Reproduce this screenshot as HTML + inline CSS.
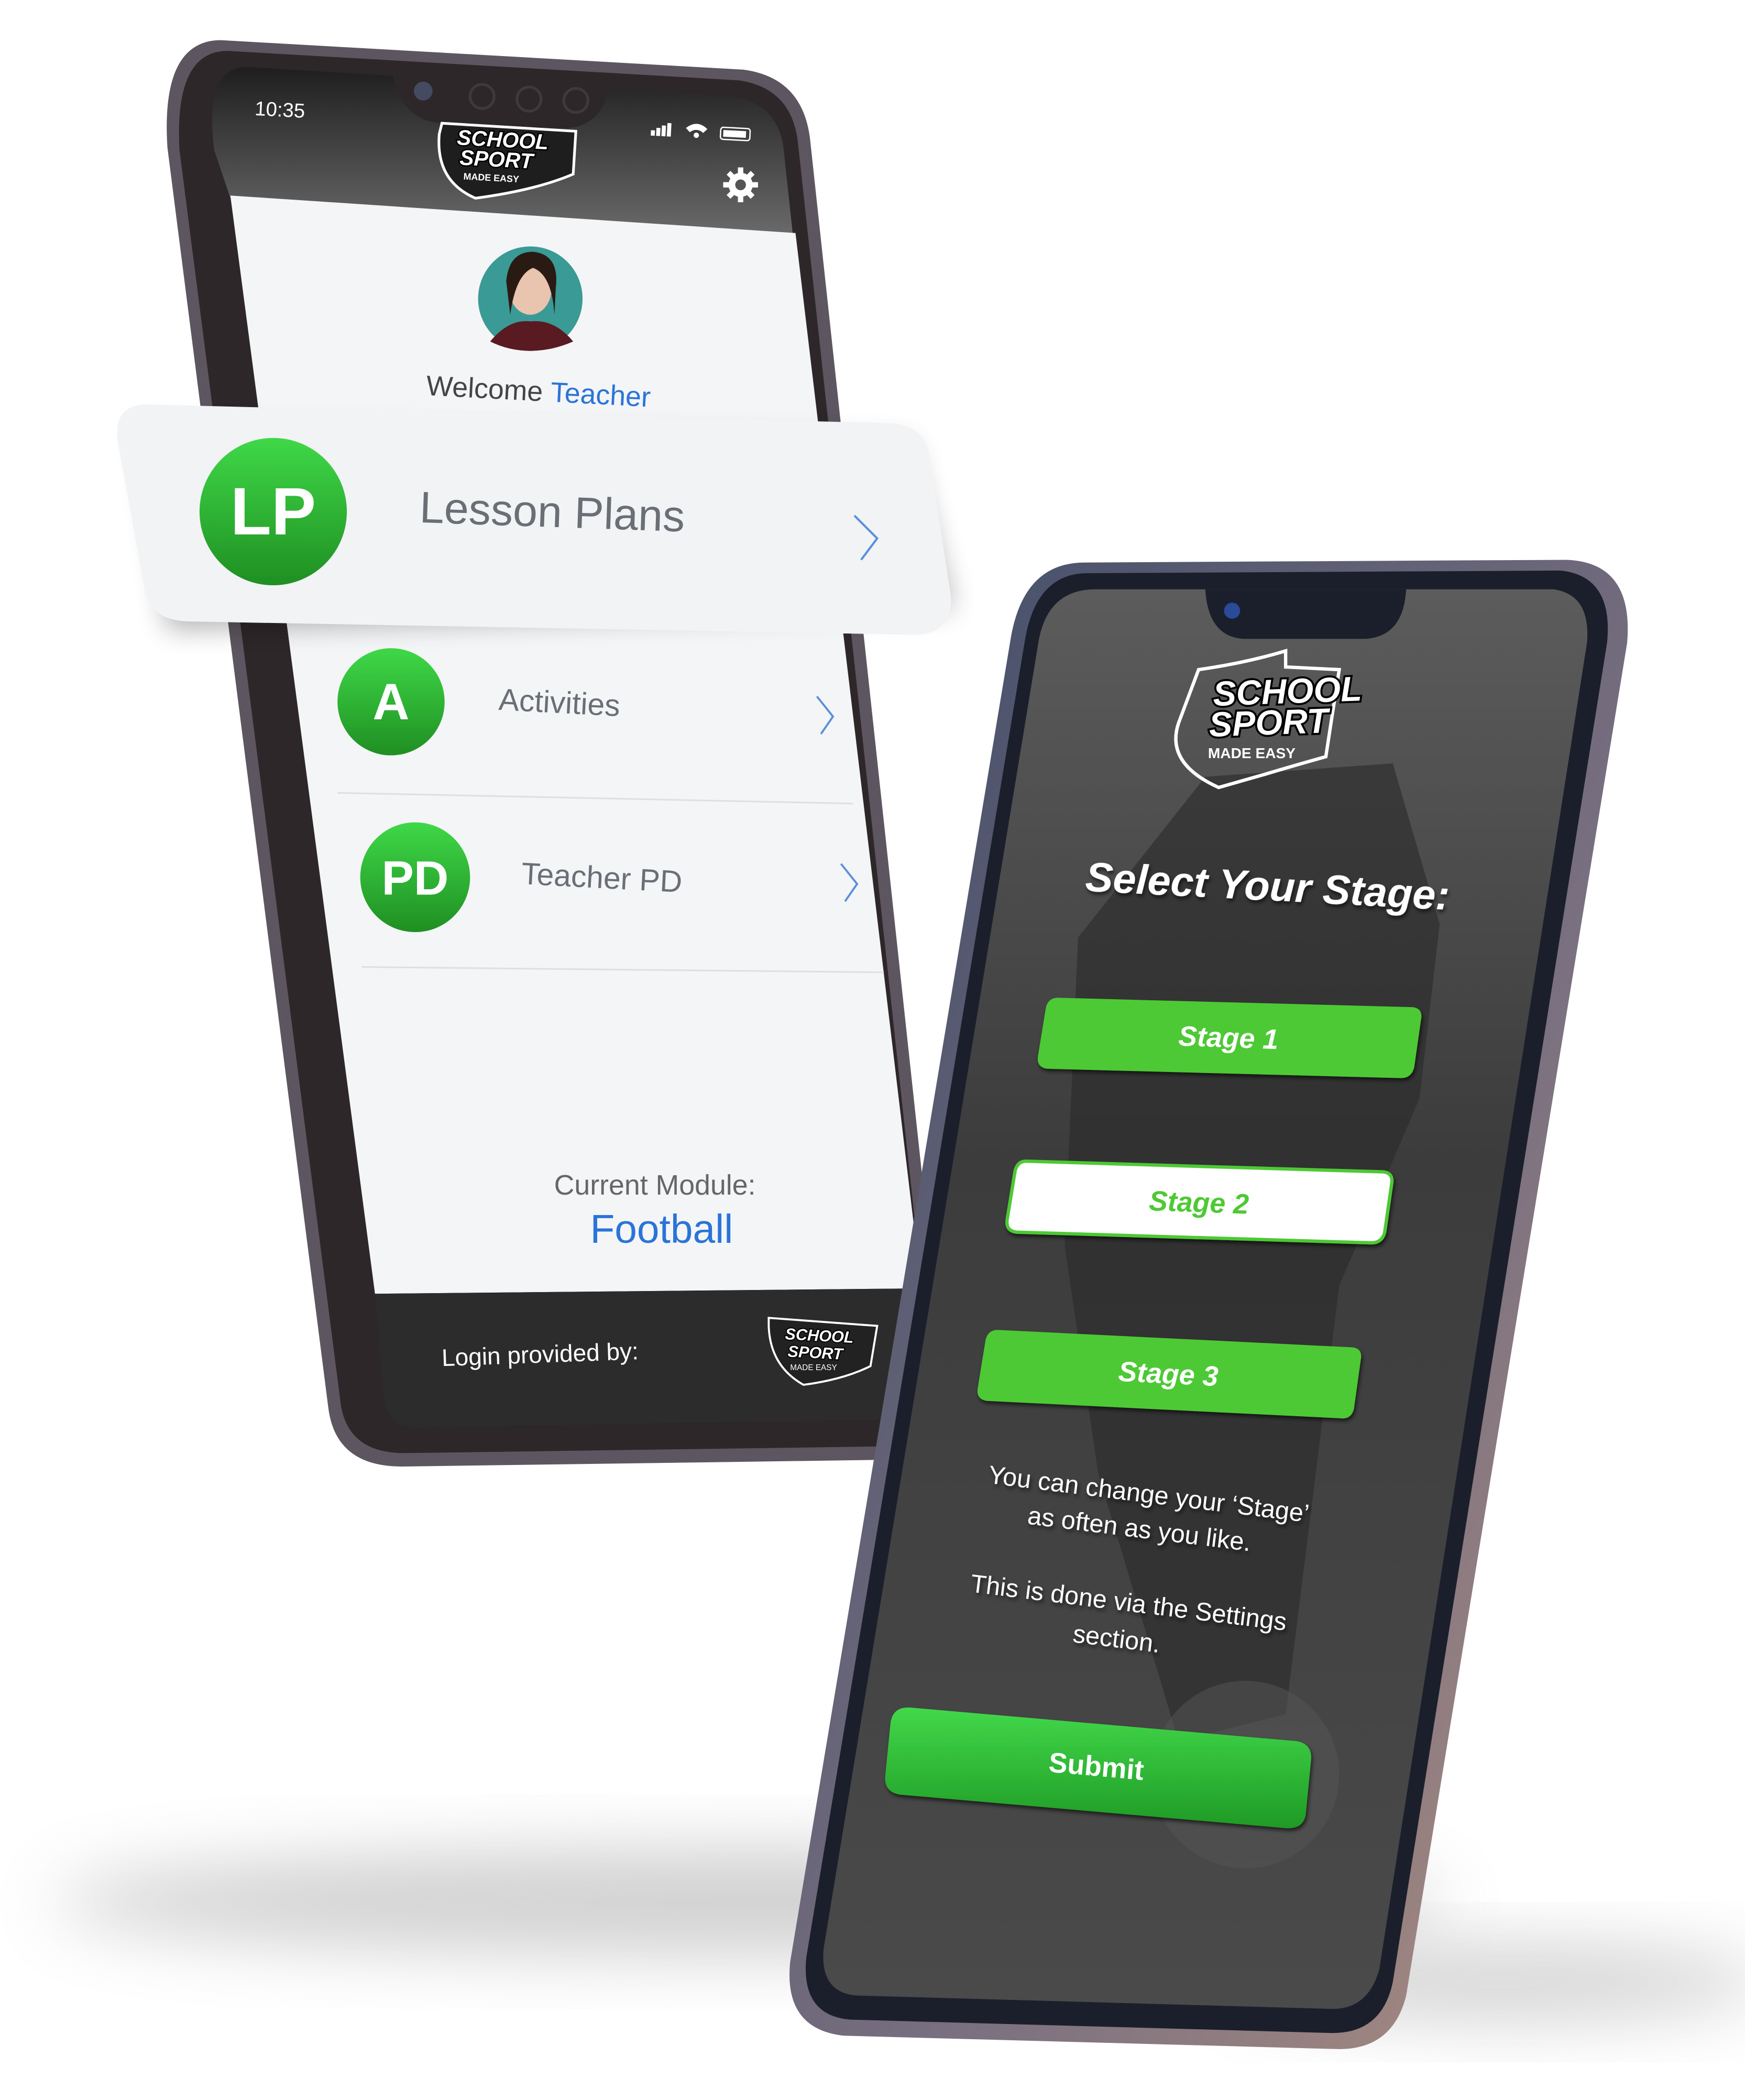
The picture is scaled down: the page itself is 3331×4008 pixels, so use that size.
<!DOCTYPE html>
<html><head><meta charset="utf-8"><style>
html,body{margin:0;padding:0;background:#fff;width:3331px;height:4008px;overflow:hidden}
svg{display:block}
text{font-family:"Liberation Sans",sans-serif}
.lg{paint-order:stroke}
</style></head><body>
<svg width="3331" height="4008" viewBox="0 0 1303 1568" preserveAspectRatio="none" xmlns="http://www.w3.org/2000/svg">
<defs>
<filter id="blur" x="-50%" y="-50%" width="200%" height="200%"><feGaussianBlur stdDeviation="25"/></filter>
<filter id="sh" x="-20%" y="-20%" width="140%" height="160%"><feGaussianBlur stdDeviation="10"/></filter>
<filter id="ts"><feDropShadow dx="1" dy="2" stdDeviation="1.5" flood-color="#000" flood-opacity="0.6"/></filter>
<linearGradient id="g" x1="0" y1="0" x2="0" y2="1"><stop offset="0" stop-color="#3fd848"/><stop offset="1" stop-color="#1f8f22"/></linearGradient>
<linearGradient id="hdr" x1="0" y1="0" x2="0" y2="1"><stop offset="0" stop-color="#1e1e1e"/><stop offset="1" stop-color="#6a6a6a"/></linearGradient>
<linearGradient id="photo" x1="0" y1="0" x2="0" y2="1"><stop offset="0" stop-color="#5c5c5c"/><stop offset="0.4" stop-color="#3c3c3c"/><stop offset="1" stop-color="#4a4a4a"/></linearGradient>
<linearGradient id="frameR" x1="0" y1="0" x2="1" y2="1"><stop offset="0" stop-color="#3d4a66"/><stop offset="0.6" stop-color="#7a7080"/><stop offset="1" stop-color="#b09080"/></linearGradient>
<linearGradient id="sub" x1="0" y1="0" x2="0" y2="1"><stop offset="0" stop-color="#42d84a"/><stop offset="1" stop-color="#1f9a25"/></linearGradient>
</defs>
<rect width="1303" height="1568" fill="#fff"/>
<ellipse cx="560" cy="1420" rx="520" ry="40" fill="#999" opacity="0.45" filter="url(#blur)"/>
<ellipse cx="1120" cy="1480" rx="200" ry="30" fill="#999" opacity="0.4" filter="url(#blur)"/>

<!-- LEFT PHONE -->
<path d="M165,30 L555,52 Q600,58 605,105 L705,1030 Q710,1085 660,1090 L300,1095 Q250,1095 245,1050 L125,110 Q120,30 165,30Z" fill="#5d5660"/>
<path d="M170,38 L552,60 Q592,66 596,108 L696,1030 Q700,1078 658,1080 L302,1085 Q258,1085 254,1045 L134,112 Q130,38 170,38Z" fill="#2d2729"/>
<path d="M185,50 L545,72 Q580,76 585,110 L592,175 L172,148 L160,112 Q152,50 185,50Z" fill="url(#hdr)"/>
<path d="M292,50 L455,60 Q452,95 420,96 L330,92 Q298,90 292,50Z" fill="#2d2729"/>
<circle cx="316" cy="68" r="7" fill="#444a60"/>
<circle cx="360" cy="72" r="9" fill="none" stroke="#3e3a3c" stroke-width="2"/>
<circle cx="395" cy="74" r="9" fill="none" stroke="#3e3a3c" stroke-width="2"/>
<circle cx="430" cy="75" r="9" fill="none" stroke="#3e3a3c" stroke-width="2"/>
<path d="M172,146 L594,174 L688,962 L280,966Z" fill="#f4f5f7"/>
<path d="M280,966 L688,962 L682,1040 Q678,1060 650,1060 L310,1066 Q288,1066 286,1040Z" fill="#2c2c2c"/>
<text x="190" y="86" font-size="15" fill="#fff" transform="rotate(3 190 86)">10:35</text>
<g fill="#fff" transform="rotate(3 520 100)">
<rect x="486" y="99" width="3" height="4"/><rect x="490" y="97" width="3" height="6"/><rect x="494" y="95" width="3" height="8"/><rect x="498" y="93" width="3" height="10"/>
<path d="M512,96 Q520,89 528,96 L525,99 Q520,95 515,99Z"/><circle cx="520" cy="101" r="2"/>
<rect x="538" y="94" width="22" height="9" rx="2" fill="none" stroke="#fff" stroke-width="1"/><rect x="540" y="96" width="17" height="5"/>
</g>
<path d="M330,92 L430,98 L428,130 Q400,142 355,148 Q325,135 328,100Z" fill="#1e1e1e" stroke="#fff" stroke-width="2"/>
<text class="lg" x="341" y="108" font-size="16" font-weight="bold" font-style="italic" fill="#fff" stroke="#000" stroke-width="2" transform="rotate(3 341 107)">SCHOOL</text>
<text class="lg" x="343" y="123" font-size="16" font-weight="bold" font-style="italic" fill="#fff" stroke="#000" stroke-width="2" transform="rotate(3 343 122)">SPORT</text>
<text x="346" y="134" font-size="7" font-weight="bold" fill="#fff" transform="rotate(3 346 133)">MADE EASY</text>
<g transform="translate(553,138)" fill="#fff"><circle r="9"/><g stroke="#fff" stroke-width="4"><line x1="0" y1="-13" x2="0" y2="13"/><line x1="-13" y1="0" x2="13" y2="0"/><line x1="-9" y1="-9" x2="9" y2="9"/><line x1="-9" y1="9" x2="9" y2="-9"/></g><circle r="4" fill="#555"/></g>
<circle cx="396" cy="223" r="39" fill="#3a9a95"/>
<ellipse cx="396" cy="215" rx="16" ry="20" fill="#e9c4ae"/>
<path d="M378,210 Q380,188 398,188 Q418,190 415,215 L414,235 Q412,205 398,200 Q385,205 381,235Z" fill="#2a1a14"/>
<path d="M366,255 Q380,238 396,240 Q414,238 428,255 Q412,262 396,262 Q380,262 366,255Z" fill="#5a1a22"/>
<text x="318" y="295" font-size="21" fill="#444" transform="rotate(3 318 295)">Welcome <tspan fill="#2a74d8">Teacher</tspan></text>
<circle cx="292" cy="524" r="40" fill="url(#g)"/>
<text x="292" y="537" font-size="38" font-weight="bold" fill="#fff" text-anchor="middle">A</text>
<text x="372" y="530" font-size="23" fill="#6a6f76" transform="rotate(3 372 530)">Activities</text>
<path d="M610,520 L622,535 L613,548" fill="none" stroke="#5a8fdc" stroke-width="1.5"/>
<path d="M252,592 L637,600" stroke="#dedfe2" stroke-width="1.2"/>
<circle cx="310" cy="655" r="41" fill="url(#g)"/>
<text x="310" y="668" font-size="36" font-weight="bold" fill="#fff" text-anchor="middle">PD</text>
<text x="389" y="660" font-size="23" fill="#6a6f76" transform="rotate(3 389 660)">Teacher PD</text>
<path d="M628,645 L640,660 L631,673" fill="none" stroke="#5a8fdc" stroke-width="1.5"/>
<path d="M270,722 L660,726" stroke="#dedfe2" stroke-width="1.2"/>
<text x="489" y="892" font-size="21" fill="#666" text-anchor="middle">Current Module:</text>
<text x="494" y="928" font-size="30" fill="#2a74d8" text-anchor="middle">Football</text>
<text x="330" y="1020" font-size="18" fill="#fff" transform="rotate(-2 330 1020)">Login provided by:</text>
<path d="M574,984 L655,990 L650,1020 Q630,1030 600,1034 Q575,1020 574,990Z" fill="#222" stroke="#fff" stroke-width="1.5"/>
<text class="lg" x="586" y="1000" font-size="12" font-weight="bold" font-style="italic" fill="#fff" stroke="#000" stroke-width="1.5" transform="rotate(3 586 1000)">SCHOOL</text>
<text class="lg" x="588" y="1013" font-size="12" font-weight="bold" font-style="italic" fill="#fff" stroke="#000" stroke-width="1.5" transform="rotate(3 588 1013)">SPORT</text>
<text x="590" y="1023" font-size="6" fill="#fff">MADE EASY</text>

<path d="M105,320 L680,330 L712,455 L125,470Z" fill="#000" opacity="0.3" filter="url(#sh)"/>
<path d="M110,302 L665,316 Q690,318 694,340 L710,445 Q712,472 685,474 L140,464 Q112,463 108,440 L88,330 Q84,302 110,302Z" fill="#f2f3f5"/>
<circle cx="204" cy="382" r="55" fill="url(#g)"/>
<text x="204" y="399" font-size="50" font-weight="bold" fill="#fff" text-anchor="middle">LP</text>
<text x="313" y="390" font-size="33" fill="#6a6f76" transform="rotate(2 313 390)">Lesson Plans</text>
<path d="M638,385 L655,402 L643,418" fill="none" stroke="#5a8fdc" stroke-width="1.6"/>

<!-- RIGHT PHONE -->
<path d="M810,420 L1170,418 Q1220,420 1215,480 L1050,1490 Q1040,1530 1000,1530 L630,1520 Q585,1515 590,1465 L755,475 Q765,420 810,420Z" fill="url(#frameR)"/>
<path d="M812,428 L1165,426 Q1205,430 1200,480 L1040,1480 Q1032,1518 995,1518 L635,1508 Q598,1505 602,1462 L765,480 Q773,428 812,428Z" fill="#1b1f2b"/>
<path d="M818,440 L1160,440 Q1188,444 1185,480 L1030,1470 Q1022,1500 995,1500 L640,1490 Q612,1488 615,1455 L775,482 Q781,440 818,440Z" fill="url(#photo)"/>
<path d="M900,580 L1040,570 L1075,690 L1060,820 L1000,960 L960,1280 L880,1300 L820,1100 L795,930 L805,700Z" fill="#2a2a2a" opacity="0.6"/>
<circle cx="930" cy="1325" r="70" fill="#555" opacity="0.5"/>
<path d="M900,440 L1050,440 Q1048,475 1020,477 L928,477 Q902,475 900,440Z" fill="#1b1f2b"/>
<circle cx="920" cy="456" r="6" fill="#2a4a9a"/>
<path d="M895,500 Q930,495 960,486 L960,498 L1000,500 L990,565 Q965,572 945,578 L910,588 Q870,570 880,540Z" fill="none" stroke="#fff" stroke-width="2.5"/>
<text class="lg" x="906" y="527" font-size="26" font-weight="bold" font-style="italic" fill="#fff" stroke="#000" stroke-width="3" transform="rotate(-2 906 526)">SCHOOL</text>
<text class="lg" x="903" y="550" font-size="26" font-weight="bold" font-style="italic" fill="#fff" stroke="#000" stroke-width="3" transform="rotate(-2 903 549)">SPORT</text>
<text x="902" y="566" font-size="11" font-weight="bold" fill="#fff">MADE EASY</text>
<text x="810" y="665" font-size="31" font-weight="bold" font-style="italic" fill="#fff" filter="url(#ts)" transform="rotate(3 810 665)">Select Your Stage:</text>
<path d="M790,745 L1055,752 Q1063,753 1061,762 L1056,797 Q1054,805 1046,805 L782,798 Q774,797 775,789 L781,752 Q783,745 790,745Z" fill="#4ec934" filter="url(#ts)"/>
<text x="917" y="782" font-size="21" font-weight="bold" font-style="italic" fill="#fff" text-anchor="middle" transform="rotate(2 917 782)">Stage 1</text>
<path d="M766,867 L1033,875 Q1041,876 1039,885 L1034,920 Q1032,928 1024,928 L759,920 Q751,919 752,911 L758,874 Q760,867 766,867Z" fill="#fff" stroke="#4ec934" stroke-width="2.5" filter="url(#ts)"/>
<text x="895" y="905" font-size="21" font-weight="bold" font-style="italic" fill="#4ec934" text-anchor="middle" transform="rotate(2 895 905)">Stage 2</text>
<path d="M745,993 L1010,1006 Q1018,1007 1016,1016 L1011,1052 Q1009,1060 1001,1059 L737,1046 Q729,1045 730,1037 L736,1000 Q738,993 745,993Z" fill="#4ec934" filter="url(#ts)"/>
<text x="872" y="1033" font-size="21" font-weight="bold" font-style="italic" fill="#fff" text-anchor="middle" transform="rotate(3 872 1033)">Stage 3</text>
<g font-size="19" fill="#fff" text-anchor="middle" filter="url(#ts)">
<text x="857" y="1122" transform="rotate(7 857 1122)">You can change your ‘Stage’</text>
<text x="850" y="1148" transform="rotate(7 850 1148)">as often as you like.</text>
<text x="842" y="1203" transform="rotate(7 842 1203)">This is done via the Settings</text>
<text x="833" y="1230" transform="rotate(7 833 1230)">section.</text>
</g>
<path d="M680,1275 L968,1300 Q980,1302 979,1314 L975,1355 Q973,1366 960,1365 L672,1340 Q660,1338 661,1326 L665,1286 Q667,1274 680,1275Z" fill="url(#sub)" filter="url(#ts)"/>
<text x="818" y="1326" font-size="21" font-weight="bold" fill="#fff" text-anchor="middle" transform="rotate(5 818 1326)">Submit</text>
</svg>
</body></html>
